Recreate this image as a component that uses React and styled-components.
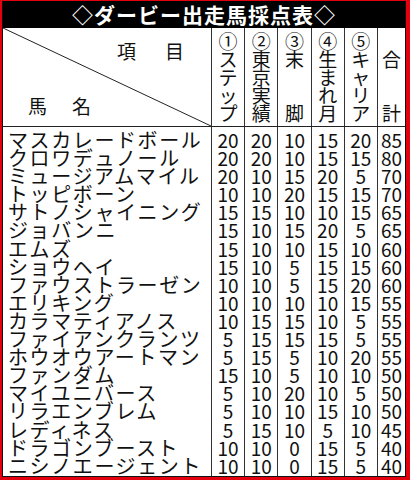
import styled, { createGlobalStyle } from "styled-components";

const GlobalStyle = createGlobalStyle`
    html, body {
        margin: 0;
        padding: 0;
        background: #ffffff;
    }
    body {
        font-family: "Noto Sans CJK JP", "Noto Sans", sans-serif;
        color: #111;
    }
`;

const COLS = "208px repeat(5, 33.2px) 1fr";

const Frame = styled.div`
    box-sizing: border-box;
    width: 410px;
    height: 480px;
    border-style: solid;
    border-color: #e3000f;
    border-width: 1px 4px 3px 2px;
`;

const Sheet = styled.div`
    box-sizing: border-box;
    height: 100%;
    border: 1px solid #111;
    border-top: none;
    display: flex;
    flex-direction: column;
`;

const TitleBar = styled.div`
    height: 27px;
    flex: none;
    background: #000;
    color: #fff;
    font-weight: 700;
    font-size: 21px;
    letter-spacing: 1px;
    line-height: 27px;
    text-align: center;
`;

const HeadRow = styled.div`
    display: grid;
    grid-template-columns: ${COLS};
    height: 99px;
    flex: none;
    border-bottom: 1px solid #222;
    box-sizing: border-box;
`;

const Corner = styled.div`
    position: relative;
    display: flex;
    flex-direction: column;
    font-size: 19px;
    line-height: 19px;
`;

const Diagonal = styled.svg`
    position: absolute;
    inset: 0;
    width: 100%;
    height: 100%;
`;

const CornerLabel = styled.div`
    padding-left: ${p => p.$left}px;
    padding-top: ${p => p.$top}px;
    letter-spacing: ${p => p.$spacing}px;
`;

const HeadCell = styled.div`
    border-left: 1px solid #333;
    display: flex;
    flex-direction: column;
    align-items: center;
    padding-top: 4px;
    font-size: 19px;
    line-height: 18px;
`;

const HeadChar = styled.span`
    display: block;
    height: 18px;
    width: 19px;
    text-align: center;
`;

const Body = styled.div`
    flex: 1;
    display: flex;
    flex-direction: column;
`;

const Row = styled.div`
    display: grid;
    grid-template-columns: ${COLS};
    height: ${p => (p.$first ? 22.1 : 18.1)}px;
    flex: none;
    &:last-child {
        flex: 1;
    }
`;

const NameCell = styled.div`
    display: flex;
    align-items: flex-start;
    padding-left: 5px;
    padding-top: ${p => (p.$first ? 4 : 0)}px;
    font-size: 20px;
    letter-spacing: 1.6px;
    line-height: 18.1px;
    white-space: nowrap;
`;

const ScoreCell = styled.div`
    border-left: 1px solid #333;
    display: flex;
    align-items: flex-start;
    justify-content: center;
    padding-top: ${p => (p.$first ? 4 : 0)}px;
    font-size: 19px;
    line-height: 18.1px;
`;

const headers = [
    ["①", "ス", "テ", "ッ", "プ"],
    ["②", "東", "京", "実", "績"],
    ["③", "末", "\u3000", "\u3000", "脚"],
    ["④", "生", "ま", "れ", "月"],
    ["⑤", "キ", "ャ", "リ", "ア"],
    ["\u3000", "合", "\u3000", "\u3000", "計"],
];

const horses = [
    ["マスカレードボール", 20, 20, 10, 15, 20, 85],
    ["クロワデュノール", 20, 20, 10, 15, 15, 80],
    ["ミュージアムマイル", 20, 10, 15, 20, 5, 70],
    ["トッピボーン", 10, 10, 20, 15, 15, 70],
    ["サトノシャイニング", 15, 15, 10, 10, 15, 65],
    ["ジョバンニ", 15, 10, 15, 20, 5, 65],
    ["エムズ", 15, 10, 10, 15, 10, 60],
    ["ショウヘイ", 15, 10, 5, 15, 15, 60],
    ["ファウストラーゼン", 10, 10, 5, 15, 20, 60],
    ["エリキング", 10, 10, 10, 10, 15, 55],
    ["カラマティアノス", 10, 15, 15, 10, 5, 55],
    ["ファイアンクランツ", 5, 15, 15, 15, 5, 55],
    ["ホウオウアートマン", 5, 15, 5, 10, 20, 55],
    ["ファンダム", 15, 10, 5, 10, 10, 50],
    ["マイユニバース", 5, 10, 20, 10, 5, 50],
    ["リラエンブレム", 5, 10, 10, 15, 10, 50],
    ["レディネス", 5, 15, 10, 5, 10, 45],
    ["ドラゴンブースト", 10, 10, 0, 15, 5, 40],
    ["ニシノエージェント", 10, 10, 0, 15, 5, 40],
];

const App = () => {
    return (
        <>
            <GlobalStyle />
            <Frame>
                <Sheet>
                    <TitleBar>◇ダービー出走馬採点表◇</TitleBar>
                    <HeadRow>
                        <Corner>
                            <Diagonal viewBox="0 0 100 100" preserveAspectRatio="none">
                                <line x1="0" y1="0" x2="100" y2="100" stroke="#222" strokeWidth="1" vectorEffect="non-scaling-stroke" />
                            </Diagonal>
                            <CornerLabel $left={114} $top={13} $spacing={5}>項　目</CornerLabel>
                            <CornerLabel $left={25} $top={36} $spacing={3}>馬　名</CornerLabel>
                        </Corner>
                        {headers.map((chars, i) => (
                            <HeadCell key={i}>
                                {chars.map((c, j) => (
                                    <HeadChar key={j}>{c}</HeadChar>
                                ))}
                            </HeadCell>
                        ))}
                    </HeadRow>
                    <Body>
                        {horses.map(([name, ...scores], i) => (
                            <Row key={name} $first={i === 0}>
                                <NameCell $first={i === 0}>{name}</NameCell>
                                {scores.map((s, j) => (
                                    <ScoreCell key={j} $first={i === 0}>{s}</ScoreCell>
                                ))}
                            </Row>
                        ))}
                    </Body>
                </Sheet>
            </Frame>
        </>
    );
};

export default App;
